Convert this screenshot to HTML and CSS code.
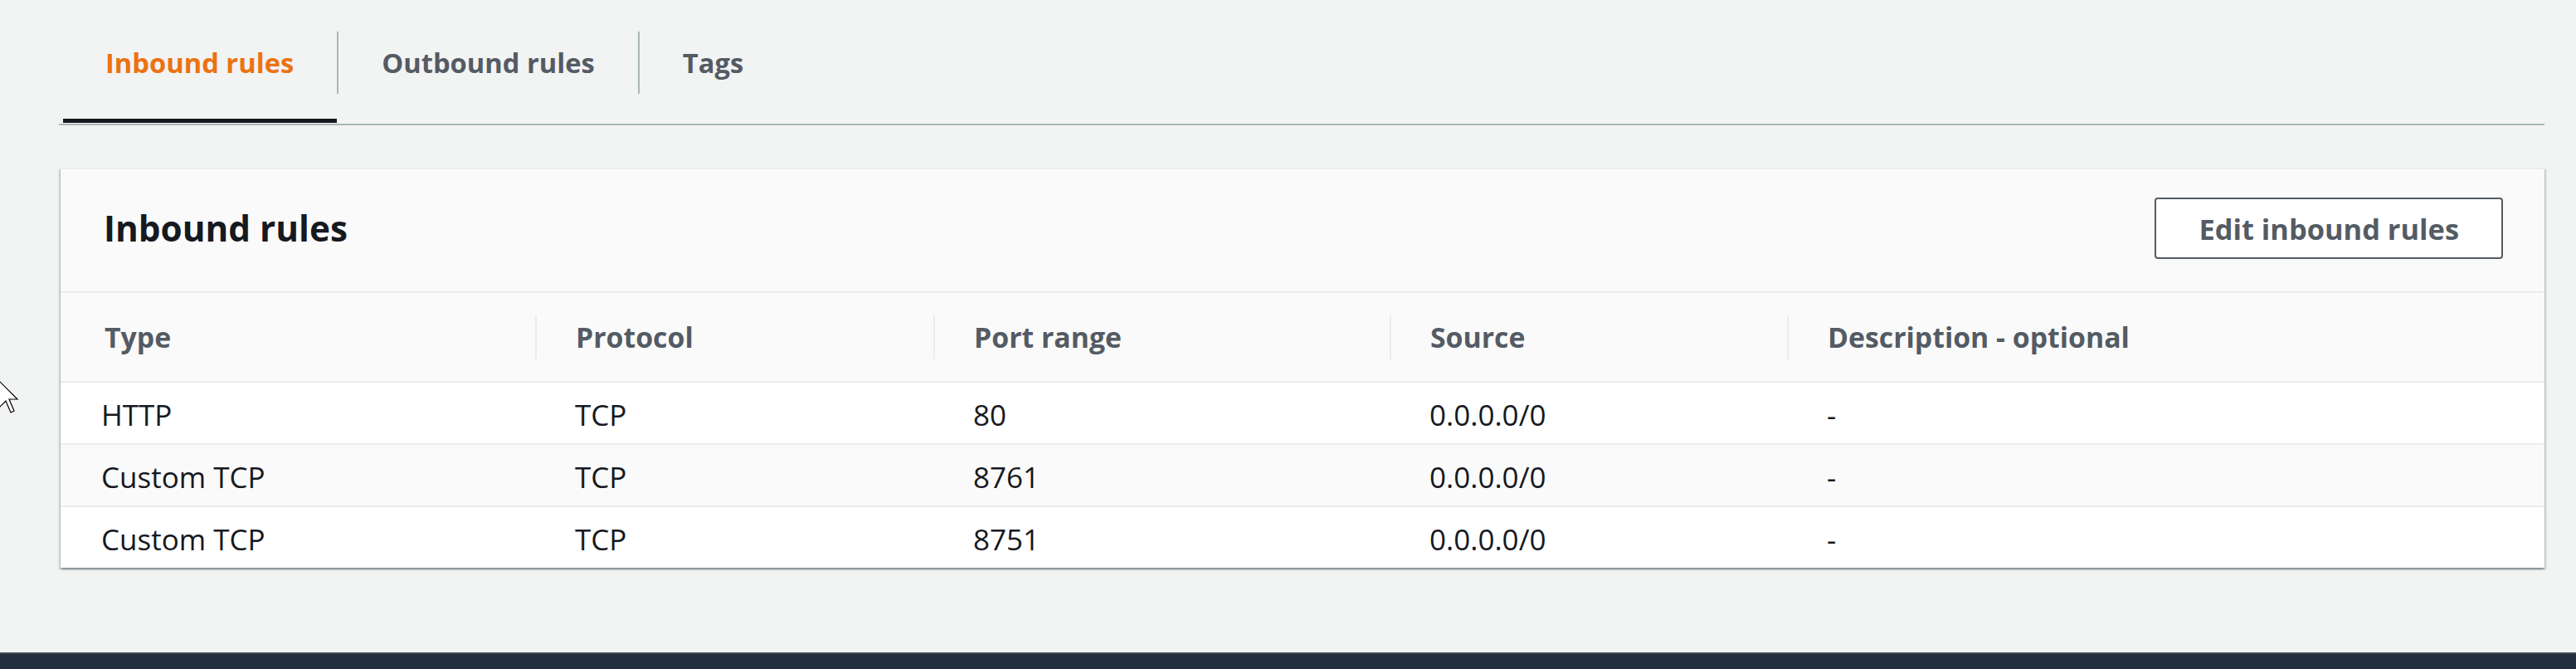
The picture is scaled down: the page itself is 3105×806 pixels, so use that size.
FILE: index.html
```html
<!DOCTYPE html>
<html lang="en">
<head>
<meta charset="utf-8">
<title>Security group rules</title>
<link rel="stylesheet" href="styles.css">
</head>
<body>
<div class="page">
  <svg class="cursor" width="26" height="42" viewBox="0 0 13 21" aria-hidden="true">
    <path d="M1 1 L1 17 L5 13 L8 20 L10 19 L7 12 L12 12 Z" fill="#fff" stroke="#000" stroke-width="0.6" stroke-linejoin="miter"/>
  </svg>
  <main class="content">
    <nav class="tabs">
      <div class="tab active"><span class="tab-label">Inbound rules</span></div>
      <div class="tab"><span class="tab-label">Outbound rules</span></div>
      <div class="tab"><span class="tab-label">Tags</span></div>
    </nav>
    <section class="card">
      <header class="card-header">
        <h2 class="card-title">Inbound rules</h2>
        <button class="btn" type="button">Edit inbound rules</button>
      </header>
      <div class="rules">
        <div class="row head">
          <div class="hcell first"><span>Type</span></div>
          <div class="hcell"><span>Protocol</span></div>
          <div class="hcell"><span>Port range</span></div>
          <div class="hcell"><span>Source</span></div>
          <div class="hcell"><span>Description - optional</span></div>
        </div>
        <div class="row">
          <div class="cell">HTTP</div>
          <div class="cell">TCP</div>
          <div class="cell">80</div>
          <div class="cell">0.0.0.0/0</div>
          <div class="cell">-</div>
        </div>
        <div class="row alt">
          <div class="cell">Custom TCP</div>
          <div class="cell">TCP</div>
          <div class="cell">8761</div>
          <div class="cell">0.0.0.0/0</div>
          <div class="cell">-</div>
        </div>
        <div class="row">
          <div class="cell">Custom TCP</div>
          <div class="cell">TCP</div>
          <div class="cell">8751</div>
          <div class="cell">0.0.0.0/0</div>
          <div class="cell">-</div>
        </div>
      </div>
    </section>
  </main>
  <footer class="footer"></footer>
</div>
</body>
</html>
```
FILE: styles.css
```css
html, body {
  margin: 0;
  padding: 0;
}

body {
  background: #f2f3f3;
  font-family: "Open Sans", "Noto Sans", "Liberation Sans", sans-serif;
  color: #16191f;
}

.page {
  position: relative;
  min-height: 100vh;
  display: flex;
  flex-direction: column;
  overflow: hidden;
}

.cursor {
  position: absolute;
  left: -3px;
  top: 457px;
}

.content {
  flex: 1;
  margin-left: 71px;
  width: 2996px;
}

/* Tabs */
.tabs {
  display: flex;
  padding-top: 38px;
  padding-left: 5px;
  border-bottom: 2px solid #aab7b8;
}

.tab {
  padding-bottom: 30px;
  border-bottom: 5px solid transparent;
  margin-bottom: 1px;
}

.tab.active {
  border-bottom-color: #16191f;
}

.tab-label {
  display: block;
  height: 75px;
  line-height: 75px;
  padding: 0 52px;
  border-left: 2px solid #aab7b8;
  font-size: 32.7px;
  font-weight: 700;
  color: #545b64;
  white-space: nowrap;
}

.tab:first-child .tab-label {
  border-left: 0;
  padding-left: 51px;
}

.tab.active .tab-label {
  color: #ec7211;
}

/* Card */
.card {
  margin: 51px 0 0 2px;
  background: #fafafa;
  border-top: 2px solid #eaeded;
  box-shadow: 0 2px 2px 0 rgba(0, 28, 36, 0.3),
              2px 2px 2px 0 rgba(0, 28, 36, 0.15),
              -2px 2px 2px 0 rgba(0, 28, 36, 0.15);
}

.card-header {
  display: flex;
  align-items: center;
  justify-content: space-between;
  padding: 34px 50px 39px 52px;
  border-bottom: 2px solid #eaeded;
}

.card-title {
  margin: 0;
  font-size: 42.3px;
  font-weight: 700;
  line-height: 1.2;
  color: #16191f;
}

.btn {
  height: 74px;
  padding: 0 51px;
  border: 2px solid #545b64;
  border-radius: 4px;
  background: #fff;
  color: #545b64;
  font-family: inherit;
  font-size: 34.4px;
  font-weight: 700;
  white-space: nowrap;
}

/* Rules table */
.row {
  display: grid;
  grid-template-columns: 572px 480px 550px 479px 1fr;
  align-items: center;
  box-sizing: border-box;
  height: 75px;
  border-top: 2px solid #eaeded;
  background: #fff;
}

.row.alt {
  background: #fafafa;
}

.row.head {
  height: 106px;
  border-top: 0;
  background: #fafafa;
}

.hcell {
  display: flex;
  align-items: center;
  height: 53px;
  border-left: 2px solid #eaeded;
  padding-left: 47px;
  font-size: 33.8px;
  font-weight: 700;
  color: #545b64;
  white-space: nowrap;
}

.hcell.first {
  border-left: 0;
  padding-left: 53px;
}

.cell {
  padding: 3px 0 0 48px;
  font-size: 35px;
  color: #16191f;
  white-space: nowrap;
}

.row .cell:first-child {
  padding-left: 49px;
}

/* Footer */
.footer {
  height: 20px;
  box-sizing: border-box;
  border-top: 2px solid #414a56;
  background: #232f3e;
}
```
